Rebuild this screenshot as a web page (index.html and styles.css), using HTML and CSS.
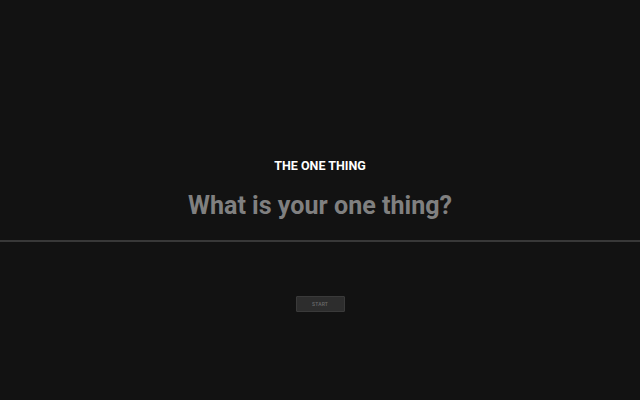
FILE: index.html
```html
<!DOCTYPE html>
<html>
<head>
<meta charset="utf-8">
<link rel="stylesheet" href="styles.css">
</head>
<body>
<main class="page">
  <div class="top">
    <h1 class="title">THE ONE THING</h1>
    <div class="question">What is your one thing?</div>
  </div>
  <div class="divider"></div>
  <div class="bottom">
    <button class="start">START</button>
  </div>
</main>
</body>
</html>
```

FILE: styles.css
```css
html, body {
  margin: 0;
  padding: 0;
  background: #121212;
  height: 100%;
}
.page {
  height: 400px;
  display: flex;
  flex-direction: column;
  font-family: Roboto, "Liberation Sans", sans-serif;
}
.top {
  height: 240px;
  display: flex;
  flex-direction: column;
  align-items: center;
  justify-content: flex-end;
  box-sizing: border-box;
}
.title {
  margin: 0;
  font-size: 12.5px;
  font-weight: 700;
  color: #ffffff;
  line-height: 15px;
}
.question {
  margin-top: 18px;
  margin-bottom: 19px;
  font-size: 25.1px;
  font-weight: 700;
  color: #808080;
  line-height: 30px;
}
.divider {
  height: 2px;
  background: #383838;
}
.bottom {
  display: flex;
  justify-content: center;
  padding-top: 54px;
}
.start {
  width: 49px;
  height: 16px;
  padding: 0;
  background: #2d2d2d;
  border: 1px solid #3a3a3a;
  border-radius: 1px;
  color: #6a6a6a;
  font-family: Roboto, "Liberation Sans", sans-serif;
  font-size: 5px;
  font-weight: 500;
  letter-spacing: 0.2px;
}
```
